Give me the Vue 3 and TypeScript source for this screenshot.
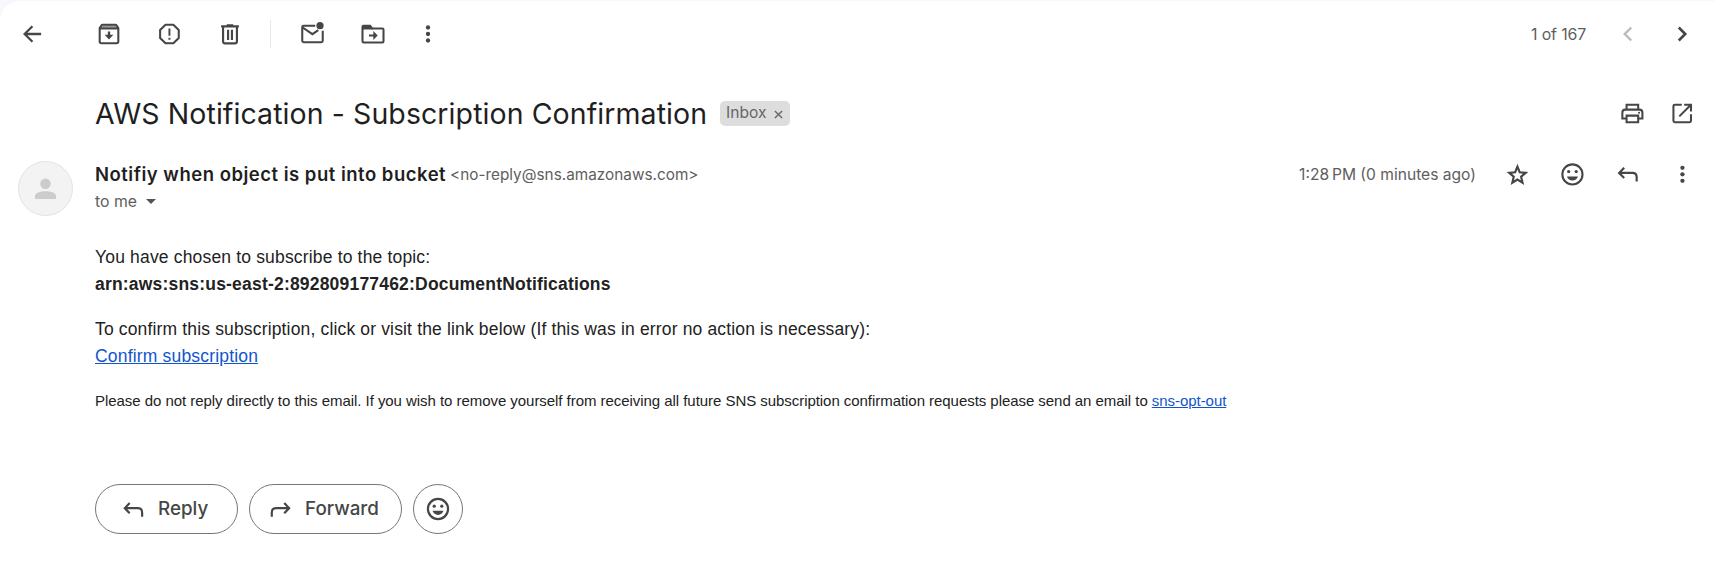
<script setup lang="ts">
const sender = {
  name: 'Notifiy when object is put into bucket',
  email: '<no-reply@sns.amazonaws.com>',
}
const topicArn = 'arn:aws:sns:us-east-2:892809177462:DocumentNotifications'
</script>

<template>
  <main class="mail">
    <header class="toolbar">
      <button class="ico back" aria-label="Back">
        <svg viewBox="0 0 24 24"><path d="M20.400 12H5.400M12.400 4.800L5.200 12l7.200 7.200" fill="none" stroke="currentColor" stroke-width="2.100" /></svg>
      </button>
      <button class="ico archive" aria-label="Archive">
        <svg viewBox="0 0 24 24">
          <path d="M4 6.500L5.800 4h12.400L20 6.500z" fill="#999b9a" />
          <path d="M3.400 6.600L5.100 3.900Q5.400 3.400 6 3.400h12q.6 0 .9.500l1.700 2.700V19q0 1.600-1.600 1.600H5q-1.600 0-1.600-1.600zM3.400 7h17.200" fill="none" stroke="currentColor" stroke-width="1.900" />
          <path d="M10.900 9.800h2.200v3h2.900L12 17l-4-4.200h2.900z" fill="currentColor" />
        </svg>
      </button>
      <button class="ico spam" aria-label="Report spam">
        <svg viewBox="0 0 24 24">
          <path d="M8.800 3.400h7.200l5 5v7.200l-5 5H8.800l-5-5V8.400z" fill="none" stroke="currentColor" stroke-width="1.900" stroke-linejoin="round" />
          <path d="M11.500 7h1.800v6.700h-1.800zM11.500 15.400h1.800v1.800h-1.800z" fill="currentColor" />
        </svg>
      </button>
      <button class="ico trash" aria-label="Delete">
        <svg viewBox="0 0 24 24"><path d="M3.800 4.900h16.400M9 4h6M5.600 5v14q0 1.600 1.600 1.600h9.600q1.600 0 1.600-1.600V5M10.200 8v9.500M13.800 8v9.500" fill="none" stroke="currentColor" stroke-width="2" /></svg>
      </button>
      <span class="divider"></span>
      <button class="ico unread" aria-label="Mark as unread">
        <svg viewBox="0 0 24 24">
          <path d="M15 4.400H4.200q-1.200 0-1.200 1.200v12.700q0 1.300 1.300 1.300h16.300q1.300 0 1.300-1.300V9.100M3.400 6l9 6.200 5.400-3.700" fill="none" stroke="currentColor" stroke-width="1.900" />
          <circle cx="19.400" cy="4.300" r="3.300" fill="currentColor" />
        </svg>
      </button>
      <button class="ico move" aria-label="Move to">
        <svg viewBox="0 0 24 24">
          <path d="M2.300 7.300V5.500q0-1 1-1h6L11.500 7h9.200q1 0 1 1v10.700q0 1.100-1.100 1.100H3.400q-1.100 0-1.100-1.100z" fill="none" stroke="currentColor" stroke-width="1.900" />
          <path d="M2.300 4.500h7.200L12 7.800H2.300zM8.300 12.400h4V9.300l4 4.100-4 4.100v-3.100h-4z" fill="currentColor" />
        </svg>
      </button>
      <button class="ico more" aria-label="More">
        <svg viewBox="0 0 24 24"><circle cx="12" cy="6" r="2" /><circle cx="12" cy="12" r="2" /><circle cx="12" cy="18" r="2" /></svg>
      </button>
      <span class="count">1 of 167</span>
      <button class="ico newer" aria-label="Newer">
        <svg viewBox="0 0 24 24"><path d="M15 6l-6 6 6 6" fill="none" stroke="currentColor" stroke-width="2.200" /></svg>
      </button>
      <button class="ico older" aria-label="Older">
        <svg viewBox="0 0 24 24"><path d="M9 6l6 6-6 6" fill="none" stroke="currentColor" stroke-width="2.400" /></svg>
      </button>
    </header>

    <section class="subject">
      <h1>AWS Notification - Subscription Confirmation</h1>
      <span class="label">Inbox
        <svg viewBox="0 0 10 10"><path d="M1 1l8 8M9 1L1 9" fill="none" stroke="currentColor" stroke-width="1.500" /></svg>
      </span>
      <button class="ico print" aria-label="Print">
        <svg viewBox="0 0 24 24">
          <path d="M7 8.400V4.300h10.700v4.100M7.500 17H3.100v-5.400Q3.100 8.900 5.800 8.900h13.100q2.700 0 2.700 2.700V17h-4.100M7 14.400h10.700v6.200H7z" fill="none" stroke="currentColor" stroke-width="1.900" />
          <circle cx="18.500" cy="11.800" r=".95" fill="currentColor" />
        </svg>
      </button>
      <button class="ico open" aria-label="Open in new window">
        <svg viewBox="0 0 24 24"><path d="M11.800 4.300H5.400q-1.300 0-1.300 1.300v13.600q0 1.300 1.300 1.300H19q1.300 0 1.300-1.300v-6.100M14 4.300h6.300v6.300M20 4.600L9.500 15.100" fill="none" stroke="currentColor" stroke-width="1.900" /></svg>
      </button>
    </section>

    <section class="message">
      <div class="avatar">
        <svg viewBox="0 0 24 24"><circle cx="12" cy="6.500" r="6" /><path d="M0 24v-3.500C0 16.500 7 15 12 15s12 1.500 12 5.500V24z" /></svg>
      </div>
      <div class="content">
        <div class="from">
          <span class="name">{{ sender.name }}</span>
          <span class="email">{{ sender.email }}</span>
          <span class="time">1:28&#8201;PM (0 minutes ago)</span>
          <button class="ico star" aria-label="Star">
            <svg viewBox="0 0 24 24"><path d="M12.400 5.200l2.100 5.200 5.500.5-4.200 3.600 1.300 5.500-4.700-2.900-4.700 2.900L9 14.500l-4.200-3.600 5.500-.5z" fill="none" stroke="currentColor" stroke-width="2" /></svg>
          </button>
          <button class="ico smile" aria-label="Add reaction">
            <svg viewBox="0 0 24 24">
              <g transform="translate(.4 .4)">
                <circle cx="12" cy="12" r="9.300" fill="none" stroke="currentColor" stroke-width="1.900" />
                <circle cx="8.500" cy="9.400" r="1.500" /><circle cx="15.500" cy="9.400" r="1.500" />
                <path d="M6.900 13.900h10.200Q15.700 17.500 12 17.500t-5.100-3.600z" />
              </g>
            </svg>
          </button>
          <button class="ico answer" aria-label="Reply">
            <svg viewBox="0 0 24 24"><path d="M8.500 6.300L3.800 11l4.700 4.700M4.300 11H16q4 0 4 4v4" fill="none" stroke="currentColor" stroke-width="2" /></svg>
          </button>
          <button class="ico menu" aria-label="More">
            <svg viewBox="0 0 24 24"><g transform="translate(.4 .3)"><circle cx="12" cy="6" r="2" /><circle cx="12" cy="12" r="2" /><circle cx="12" cy="18" r="2" /></g></svg>
          </button>
        </div>
        <div class="to">to me <i class="caret"></i></div>
        <div class="body">
          <p class="intro">You have chosen to subscribe to the topic:<br><b>{{ topicArn }}</b></p>
          <p class="confirm">To confirm this subscription, click or visit the link below (If this was in error no action is necessary):<br><a>Confirm subscription</a></p>
          <p class="notice">Please do not reply directly to this email. If you wish to remove yourself from receiving all future SNS subscription confirmation requests please send an email to <a>sns-opt-out</a></p>
        </div>
        <div class="actions">
          <button class="pill reply">
            <svg viewBox="0 0 24 24"><path d="M8 6.500l-4.500 4.700L8 15.900M4 11.200h11.500q4 0 4 4v4" fill="none" stroke="currentColor" stroke-width="2" /></svg>
            <span>Reply</span>
          </button>
          <button class="pill forward">
            <svg viewBox="0 0 24 24"><path d="M15 6.500l4.500 4.700-4.500 4.700M19 11.200H7.500q-4 0-4 4v4" fill="none" stroke="currentColor" stroke-width="2" /></svg>
            <span>Forward</span>
          </button>
          <button class="pill react" aria-label="Add reaction">
            <svg viewBox="0 0 24 24">
              <circle cx="12" cy="12" r="9.300" fill="none" stroke="currentColor" stroke-width="2" />
              <circle cx="8.500" cy="9.400" r="1.500" /><circle cx="15.500" cy="9.400" r="1.500" />
              <path d="M6.900 13.700h10.200Q15.700 17.500 12 17.500t-5.100-3.800z" />
            </svg>
          </button>
        </div>
      </div>
    </section>
  </main>
</template>

<style>
body { background: #f6f8fc; }
</style>

<style scoped>
.mail {
  box-sizing: border-box;
  height: 578px;
  margin-top: 1px;
  background: #fff;
  border-top-left-radius: 20px;
  font-family: Inter, "Liberation Sans", sans-serif;
  color: #444746;
}
button { border: 0; padding: 0; background: none; color: inherit; font: inherit; }
svg { display: block; fill: currentColor; flex: none; }
.ico { flex: none; width: 26px; height: 26px; color: #444746; }
.ico svg { width: 100%; height: 100%; }

.toolbar { display: flex; align-items: center; height: 66px; padding: 0 20px 0 19px; }
.archive { margin-left: 51px; }
.spam { margin-left: 34px; }
.trash { margin-left: 35px; }
.divider { width: 1px; height: 28px; margin: 0 28px 0 27px; background: #e6e9ee; }
.move { margin-left: 34.500px; }
.more { margin-left: 29px; }
.count { margin-left: auto; margin-right: 29px; font-size: 15.900px; letter-spacing: -0.15px; color: #5e5e5e; white-space: nowrap; }
.newer { color: #b9bab9; }
.older { margin-left: 28px; }

.subject { display: flex; align-items: center; height: 60px; margin-top: 16px; padding: 0 20px 0 95px; }
h1 { margin: 2px 0 0; font-size: 28.500px; font-weight: 400; line-height: 36px; color: #1f1f1f; white-space: nowrap; width: 611px; letter-spacing: 0.08px; }
.label { display: flex; align-items: center; gap: 8px; box-sizing: border-box; width: 70px; height: 25px; margin-left: 14px; padding: 0 0 1px 6px; border-radius: 5px; background: #ddd; font-size: 15.600px; color: #666; }
.label svg { width: 9px; height: 9px; margin-top: 3px; }
.print { margin-left: auto; }
.open { margin-left: 24px; }

.message { display: flex; margin-top: 18px; }
.avatar { display: flex; align-items: center; justify-content: center; box-sizing: border-box; flex: none; width: 55px; height: 55px; margin: 0 22px 0 18px; border: 1px solid #e3e3e3; border-radius: 50%; background: #f3f3f3; color: #ccc; }
.avatar svg { width: 21px; height: 23px; }
.content { flex: 1; min-width: 0; padding-right: 20px; }
.from { display: flex; align-items: center; height: 28px; margin-top: -1px; white-space: nowrap; }
.name { width: 355px; font-size: 18.500px; font-weight: 600; letter-spacing: 0.5px; color: #1f1f1f; }
.email { font-size: 15.300px; letter-spacing: 0.02px; color: #5e5e5e; }
.time { margin-left: auto; margin-right: 28px; font-size: 15.600px; color: #5e5e5e; }
.smile { margin-left: 29px; }
.answer { margin-left: 30px; }
.menu { margin-left: 28px; }
.to { display: flex; align-items: center; height: 26px; font-size: 15.800px; color: #5e5e5e; }
.caret { margin-left: 9px; border: 5.500px solid transparent; border-top-color: #555; border-bottom: 0; }

.body { margin-top: 30px; font: 17.500px/27px "Liberation Sans", Arial, sans-serif; color: #222; white-space: nowrap; }
.body p { margin: 0 0 18px; }
.body a { color: #15c; text-decoration: underline; }
.intro { letter-spacing: 0.17px; }
.intro b { letter-spacing: 0.195px; }
.confirm { letter-spacing: 0.157px; }
.confirm a { letter-spacing: 0.18px; }
.body .notice { margin-top: -1px; font-size: 15px; letter-spacing: -0.048px; }

.actions { display: flex; gap: 11px; margin-top: 70px; }
.pill { display: flex; align-items: center; box-sizing: border-box; height: 50px; border: 1px solid #747775; border-radius: 25px; font-size: 18.800px; font-weight: 500; color: #444746; }
.pill svg { width: 26px; height: 26px; }
.reply { width: 143px; padding-left: 25px; }
.forward { width: 153px; padding-left: 18px; }
.pill span { margin: -1px 0 0 11px; }
.pill.react { justify-content: center; width: 50px; }
</style>
